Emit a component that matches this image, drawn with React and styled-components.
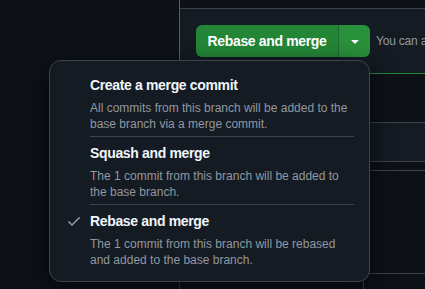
import React from "react";
import styled, { createGlobalStyle } from "styled-components";

const GlobalStyle = createGlobalStyle`
  html, body { margin: 0; padding: 0; background: #0d1117; overflow: hidden; }
  body { font-family: "Liberation Sans", Arial, sans-serif; }
  * { box-sizing: border-box; }
`;

const Page = styled.div`
  display: grid;
  grid-template-columns: 179px 1fr;
  width: 425px;
  height: 289px;
  overflow: hidden;
  background: #0d1117;
`;

const Sidebar = styled.div`
  background: #0d1117;
`;

const Column = styled.div`
  display: flex;
  flex-direction: column;
  min-width: 0;
`;

const Band = styled.div`
  flex: none;
  height: ${(p) => p.$h}px;
  box-sizing: content-box;
  background: ${(p) => p.$fill || "#0d1117"};
  border-left: 1px solid ${(p) => p.$edge || "#3d444d"};
  border-top: ${(p) => (p.$top ? `1px solid ${p.$top}` : "none")};
  border-bottom: ${(p) => (p.$bottom ? `1px solid ${p.$bottom}` : "none")};
`;

const MergeBox = styled.div`
  flex: none;
  height: 64px;
  box-sizing: content-box;
  display: flex;
  align-items: center;
  gap: 6px;
  padding-left: 16px;
  background: #151b23;
  border-left: 1px solid #238636;
  border-top: 1px solid #3d444d;
  border-bottom: 1px solid #238636;
  white-space: nowrap;
`;

const Footer = styled.div`
  flex: 1;
  display: grid;
  grid-template-columns: 1fr 62px;
  border-left: 1px solid #3d444d;
  border-top: 1px solid #3d444d;
`;

const FooterAside = styled.div`
  border-left: 1px solid #3d444d;
`;

const ButtonGroup = styled.div`
  position: relative;
  flex: none;
  display: flex;
  height: 32px;
`;

const MainButton = styled.button`
  width: 142px;
  height: 32px;
  padding: 0;
  border: none;
  border-radius: 6px 0 0 6px;
  background: #238636;
  color: #ffffff;
  font-family: "Liberation Sans", Arial, sans-serif;
  font-weight: 700;
  font-size: 14px;
  letter-spacing: -0.35px;
  cursor: pointer;
`;

const CaretButton = styled.button`
  width: 32px;
  height: 32px;
  padding: 0;
  display: flex;
  align-items: center;
  justify-content: center;
  border: none;
  border-left: 1px solid #1c6d2c;
  border-radius: 0 6px 6px 0;
  background: #29903b;
  color: #ffffff;
  cursor: pointer;
`;

const Hint = styled.span`
  flex: none;
  font-size: 12px;
  letter-spacing: -0.2px;
  color: #9198a1;
  white-space: nowrap;
`;

const Menu = styled.div`
  position: absolute;
  right: 0;
  top: calc(100% + 3px);
  width: 321px;
  padding: 8px 0 9px;
  background: #151b23;
  border: 1px solid #3d444d;
  border-radius: 12px;
  box-shadow: 0 8px 24px rgba(1, 4, 9, 0.75);
  z-index: 10;
  white-space: normal;
`;

const Item = styled.div`
  display: grid;
  grid-template-columns: 16px 264px;
  column-gap: 8px;
  padding: 0 15px 0 16px;
  cursor: pointer;

  &:last-child > div:last-child {
    border-bottom: none;
  }
`;

const CheckSlot = styled.div`
  padding-top: 8px;
  color: #9198a1;
  display: flex;
  align-items: flex-start;
`;

const ItemText = styled.div`
  padding: 6px 0 4px;
  border-bottom: 1px solid #3d444d;
`;

const Title = styled.div`
  font-size: 14px;
  line-height: 20px;
  font-weight: 700;
  letter-spacing: -0.35px;
  color: #f0f6fc;
`;

const Desc = styled.div`
  margin-top: 5px;
  font-size: 12px;
  line-height: 16px;
  color: #9198a1;
`;

const CheckIcon = () => (
  <svg width="16" height="16" viewBox="0 0 16 16" fill="currentColor" aria-hidden="true">
    <path d="M13.78 4.22a.75.75 0 0 1 0 1.06l-7.25 7.25a.75.75 0 0 1-1.06 0L2.22 9.28a.751.751 0 0 1 .018-1.042.751.751 0 0 1 1.042-.018L6 10.94l6.72-6.72a.75.75 0 0 1 1.06 0Z" />
  </svg>
);

const TriangleDown = () => (
  <svg width="16" height="16" viewBox="0 0 16 16" fill="currentColor" aria-hidden="true">
    <path d="m4.427 7.427 3.396 3.396a.25.25 0 0 0 .354 0l3.396-3.396A.25.25 0 0 0 11.396 7H4.604a.25.25 0 0 0-.177.427Z" />
  </svg>
);

const options = [
  {
    title: "Create a merge commit",
    desc: "All commits from this branch will be added to the base branch via a merge commit.",
  },
  {
    title: "Squash and merge",
    desc: "The 1 commit from this branch will be added to the base branch.",
  },
  {
    title: "Rebase and merge",
    desc: "The 1 commit from this branch will be rebased and added to the base branch.",
    selected: true,
  },
];

export default function App() {
  return (
    <>
      <GlobalStyle />
      <Page>
        <Sidebar />
        <Column>
          <Band $h={8} $edge="#238636" />
          <MergeBox>
            <ButtonGroup>
              <MainButton>Rebase and merge</MainButton>
              <CaretButton aria-label="Select merge method">
                <TriangleDown />
              </CaretButton>
              <Menu role="menu">
                {options.map((o) => (
                  <Item key={o.title} role="menuitemradio" aria-checked={!!o.selected}>
                    <CheckSlot>{o.selected ? <CheckIcon /> : null}</CheckSlot>
                    <ItemText>
                      <Title>{o.title}</Title>
                      <Desc>{o.desc}</Desc>
                    </ItemText>
                  </Item>
                ))}
              </Menu>
            </ButtonGroup>
            <Hint>You can also merge this with the command line.</Hint>
          </MergeBox>
          <Band $h={48} />
          <Band $h={38} $fill="#151b23" $top="#3d444d" $bottom="#3d444d" />
          <Band $h={8} />
          <Band $h={102} $top="#3d444d" />
          <Footer>
            <div />
            <FooterAside />
          </Footer>
        </Column>
      </Page>
    </>
  );
}
